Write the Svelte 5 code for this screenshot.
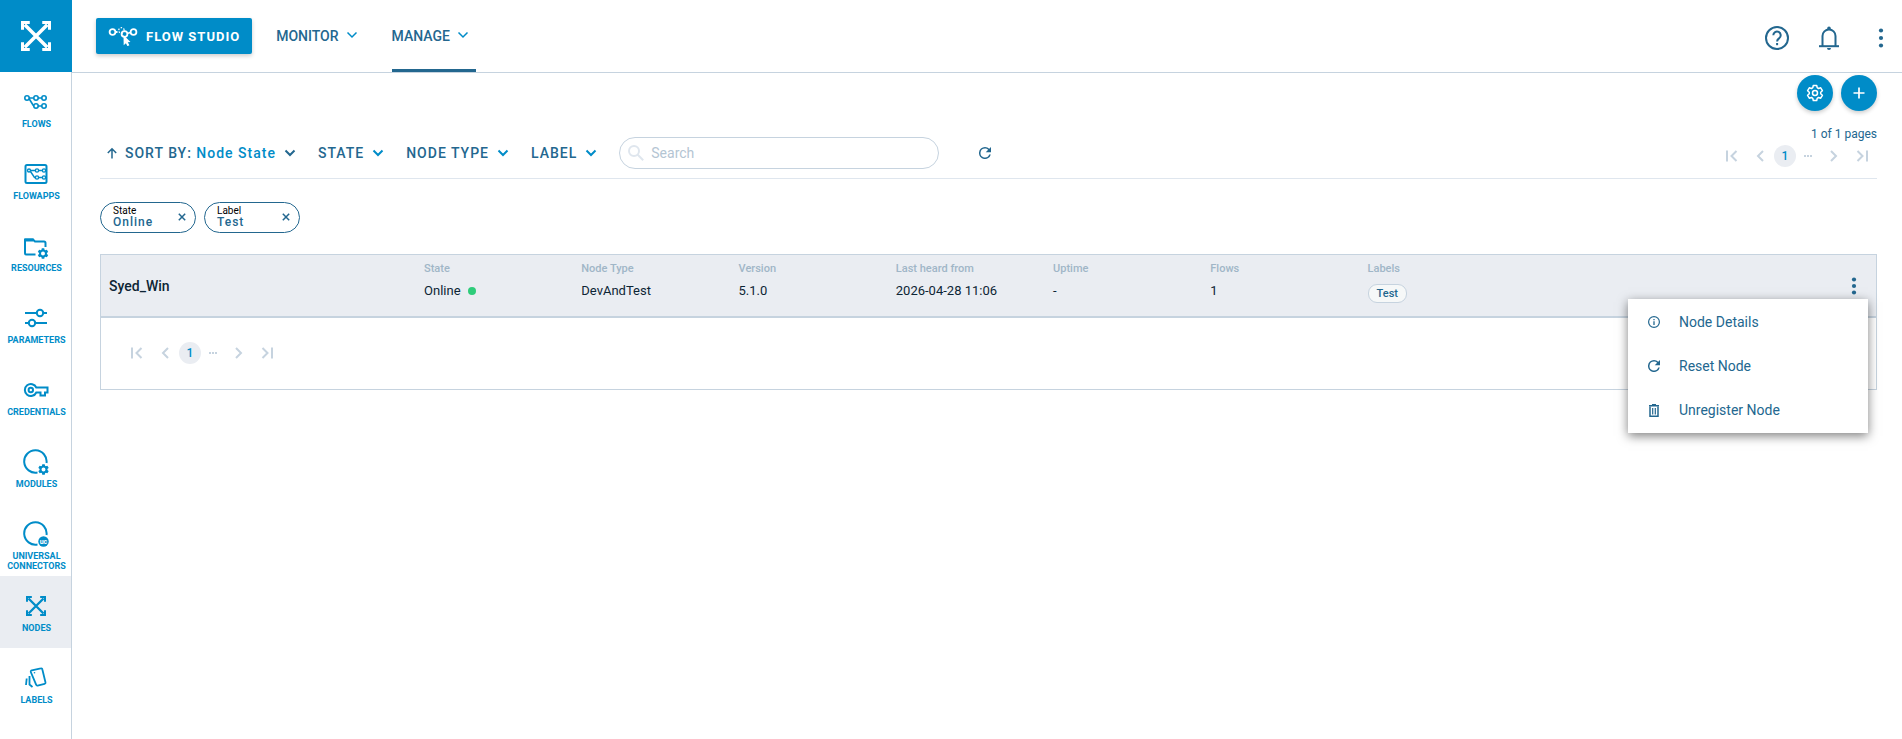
<script lang="ts">
	const navItems = [
		{ id: 'flows', label: 'Flows' },
		{ id: 'flowapps', label: 'FlowApps' },
		{ id: 'resources', label: 'Resources' },
		{ id: 'parameters', label: 'Parameters' },
		{ id: 'credentials', label: 'Credentials' },
		{ id: 'modules', label: 'Modules' },
		{ id: 'connectors', label: 'Universal Connectors' },
		{ id: 'nodes', label: 'Nodes' },
		{ id: 'labels', label: 'Labels' }
	];

	const menuItems = [
		{ id: 'info', label: 'Node Details' },
		{ id: 'refresh', label: 'Reset Node' },
		{ id: 'trash', label: 'Unregister Node' }
	];

	const columns = ['State', 'Node Type', 'Version', 'Last heard from', 'Uptime', 'Flows', 'Labels'];

	const nodes = [
		{
			name: 'Syed_Win',
			state: 'Online',
			values: ['DevAndTest', '5.1.0', '2026-04-28 11:06', '-', '1'],
			label: 'Test'
		}
	];

	let active = $state('nodes');
	let search = $state('');
	let menuOpen = $state(true);
	let filters = $state([
		{ name: 'State', value: 'Online' },
		{ name: 'Label', value: 'Test' }
	]);

	const removeFilter = (name: string) => {
		filters = filters.filter((f) => f.name !== name);
	};
</script>

{#snippet gear()}
	<path
		fill-rule="evenodd"
		d="M19.14 12.94c.04-.3.06-.61.06-.94s-.02-.64-.07-.94l2.03-1.58a.49.49 0 0 0 .12-.61l-1.92-3.32a.49.49 0 0 0-.59-.22l-2.39.96a7 7 0 0 0-1.62-.94l-.36-2.54A.48.48 0 0 0 13.92 2.4h-3.84a.48.48 0 0 0-.48.41l-.36 2.54c-.59.24-1.13.57-1.62.94l-2.39-.96a.48.48 0 0 0-.59.22L2.74 8.87a.48.48 0 0 0 .12.61l2.03 1.58a7 7 0 0 0 0 1.88l-2.03 1.58a.49.49 0 0 0-.12.61l1.92 3.32c.12.22.37.29.59.22l2.39-.96c.5.38 1.03.7 1.62.94l.36 2.54c.05.24.24.41.48.41h3.84c.24 0 .44-.17.47-.41l.36-2.54c.59-.24 1.13-.56 1.62-.94l2.39.96c.22.08.47 0 .59-.22l1.92-3.32a.48.48 0 0 0-.12-.61zM12 15.6a3.6 3.6 0 1 1 0-7.2 3.6 3.6 0 0 1 0 7.2z"
	/>
{/snippet}

{#snippet arrows()}
	<g fill="none" stroke="currentColor">
		<path stroke-width="2.8" d="M3 3l18 18M21 3L3 21" />
		<path stroke-width="2.4" d="M1.2 7V1.2H7M17 1.2h5.800V7M22.800 17v5.800H17M7 22.800H1.200V17" />
	</g>
{/snippet}

{#snippet navIcon(id: string)}
	{#if id === 'flows'}
		<svg width="23" height="14" viewBox="0 0 23 14" fill="none" stroke="currentColor" stroke-width="1.600">
			<circle cx="3" cy="3" r="2.200" /><circle cx="12" cy="3" r="2.200" /><circle cx="20" cy="3" r="2.200" />
			<circle cx="12" cy="11" r="2.200" /><circle cx="20" cy="11" r="2.200" />
			<path d="M5 3h4.800M14 3h4M14 11h4M5 3.500l4 6.500q.6 1 1 1" />
		</svg>
	{:else if id === 'flowapps'}
		<svg width="24" height="20" viewBox="0 0 24 20" fill="none" stroke="currentColor" stroke-width="1.400">
			<rect x="1.500" y="1" width="21" height="18" rx="1.500" stroke-width="2" />
			<circle cx="5" cy="6.500" r="1.500" /><circle cx="13" cy="6.500" r="1.600" /><circle cx="20" cy="6.500" r="1.600" />
			<circle cx="13" cy="13.500" r="1.600" /><circle cx="20" cy="13.500" r="1.600" />
			<path d="M6.500 6.500h5M14.500 6.500h4M14.500 13.500h4M6.500 7.500l4 6h1" />
		</svg>
	{:else if id === 'resources'}
		<svg width="26" height="26" viewBox="0 -4 26 26" fill="none" stroke="currentColor" stroke-width="2">
			<path d="M12.500 17.500H3.500a1.500 1.500 0 0 1-1.500-1.500V2.500h8l2 2h9a1.500 1.500 0 0 1 1.500 1.500v4" />
			<path d="M2 3h8.500" stroke-width="3" />
			<svg x="14" y="11" width="12" height="11" viewBox="2 2 20 20" fill="currentColor" stroke="none">
				{@render gear()}
			</svg>
		</svg>
	{:else if id === 'parameters'}
		<svg width="22" height="20" viewBox="0 0 22 20" fill="none" stroke="currentColor" stroke-width="2">
			<path d="M0 5h12M18 5h4M0 15h4M10 15h12" />
			<circle cx="15" cy="5" r="3.200" /><circle cx="7" cy="15" r="3.200" />
		</svg>
	{:else if id === 'credentials'}
		<svg width="26" height="16" viewBox="0 0 26 16" fill="none" stroke="currentColor" stroke-width="2">
			<path d="M13.300 5.500h11.200v5h-2.500v3h-4.500v-3h-4.200a6 6 0 1 1 0-5z" />
			<circle cx="7.800" cy="8" r="2.200" />
		</svg>
	{:else if id === 'modules' || id === 'connectors'}
		<svg width="26" height="26" viewBox="0 0 26 26" fill="none" stroke="currentColor" stroke-width="2">
			<path d="M14.500 23.500A11.200 11.200 0 1 1 23.500 14" />
			{#if id === 'modules'}
				<svg x="15" y="15" width="11" height="11" viewBox="2 2 20 20" fill="currentColor" stroke="none">
					{@render gear()}
				</svg>
			{:else}
				<circle cx="20.500" cy="20.500" r="5.200" fill="currentColor" stroke="none" />
				<text class="badge" x="20.500" y="22.500" text-anchor="middle">uc</text>
			{/if}
		</svg>
	{:else if id === 'nodes'}
		<svg width="20" height="20" viewBox="0 0 24 24">{@render arrows()}</svg>
	{:else}
		<svg width="22" height="22" viewBox="0 0 22 22" fill="none" stroke="currentColor" stroke-width="1.800">
			<path d="M6.800 3.400l9-2a1.200 1.200 0 0 1 1.500.9l3.200 13.200a1.200 1.200 0 0 1-.9 1.400l-7 1.700a1.200 1.200 0 0 1-1.400-.8L5.800 5a1.300 1.300 0 0 1 1-1.600z" />
			<path d="M4.500 9v8.500l3 2.500M1.700 11.500L1 18" />
			<circle cx="9.500" cy="5.800" r=".8" fill="currentColor" stroke="none" />
		</svg>
	{/if}
{/snippet}

{#snippet smallIcon(id: string)}
	{#if id === 'info'}
		<svg width="12" height="12" viewBox="0 0 12 12" fill="none" stroke="currentColor">
			<circle cx="6" cy="6" r="5.400" stroke-width="1.200" />
			<path d="M6 5.200V9M6 3v1.200" stroke-width="1.300" />
		</svg>
	{:else if id === 'refresh'}
		<svg width="12" height="12" viewBox="4 4 16 16" fill="currentColor">
			<path
				d="M17.650 6.350A7.960 7.960 0 0 0 12 4a8 8 0 1 0 7.730 10h-2.080A6 6 0 1 1 12 6c1.660 0 3.140.69 4.220 1.780L13 11h7V4z"
			/>
		</svg>
	{:else}
		<svg width="12" height="13" viewBox="0 0 12 13" fill="none" stroke="currentColor">
			<path d="M1 1.800h10M4 .7h4" stroke-width="1.400" />
			<path d="M2 2.500v9.700h8V2.500" stroke-width="1.500" />
			<path d="M4.700 4v6.500M7.300 4v6.500" stroke-width="1.200" />
		</svg>
	{/if}
{/snippet}

{#snippet chevron()}
	<svg class="chevron" width="12" height="8" viewBox="0 0 12 8" fill="none" stroke="currentColor">
		<path d="M1.500 1.500L6 6l4.500-4.500" />
	</svg>
{/snippet}

{#snippet kebab(size: number)}
	<svg width="6" height={size} viewBox="0 0 6 {size}" fill="currentColor">
		<circle cx="3" cy="2.500" r="2.100" />
		<circle cx="3" cy={size / 2} r="2.100" />
		<circle cx="3" cy={size - 2.5} r="2.100" />
	</svg>
{/snippet}

{#snippet pager()}
	<div class="pager">
		<button aria-label="First page">
			<svg width="12" height="12" viewBox="0 0 12 12"><path d="M1 0.500v11M10.500 1L5.500 6l5 5" /></svg>
		</button>
		<button aria-label="Previous page">
			<svg width="12" height="12" viewBox="0 0 12 12"><path d="M9 1L4 6l5 5" /></svg>
		</button>
		<button class="current">1</button>
		<span class="dots"><i></i><i></i><i></i></span>
		<button aria-label="Next page">
			<svg width="12" height="12" viewBox="0 0 12 12"><path d="M3 1l5 5-5 5" /></svg>
		</button>
		<button aria-label="Last page">
			<svg width="12" height="12" viewBox="0 0 12 12"><path d="M1.500 1l5 5-5 5M11 0.500v11" /></svg>
		</button>
	</div>
{/snippet}

<div class="app">
	<aside class="sidebar">
		<a class="logo" href="#home" aria-label="Home">
			<svg width="30" height="30" viewBox="0 0 24 24">{@render arrows()}</svg>
		</a>
		<nav>
			{#each navItems as item}
				<a
					href="#{item.id}"
					class="nav-item"
					class:active={active === item.id}
					onclick={() => (active = item.id)}
				>
					<span class="nav-icon">{@render navIcon(item.id)}</span>
					<span class="nav-label">{item.label}</span>
				</a>
			{/each}
		</nav>
	</aside>

	<div class="content">
		<header>
			<button class="studio">
				<svg width="30" height="20" viewBox="0 0 30 20" fill="none" stroke="currentColor" stroke-width="1.800">
					<circle cx="4.500" cy="6" r="2.900" /><circle cx="25.500" cy="6" r="2.900" />
					<path d="M7.500 6h2M19 7.500l3.500-1" />
					<circle cx="13.500" cy="4.500" r="2.800" stroke-dasharray="1.500 1.500" stroke-width="1.200" />
					<circle cx="16.500" cy="8" r="2.900" />
					<path d="M15.500 9l7 7-2.700.2 1.600 3-1.900 1-1.600-3-2.200 2z" fill="currentColor" stroke="none" />
				</svg>
				<span>FLOW STUDIO</span>
			</button>
			<button class="tab">MONITOR {@render chevron()}</button>
			<button class="tab selected">MANAGE {@render chevron()}</button>

			<div class="tools">
				<button aria-label="Help">
					<svg width="24" height="24" viewBox="0 0 24 24" fill="none" stroke="currentColor" stroke-width="2">
						<circle cx="12" cy="12" r="11" />
						<path d="M8.300 9.200a3.700 3.700 0 1 1 5.900 3c-1.300 1-2.100 1.500-2.100 3.300" />
						<path d="M12.100 17v2.200" />
					</svg>
				</button>
				<button aria-label="Notifications">
					<svg width="20" height="24" viewBox="0 0 20 24" fill="none" stroke="currentColor" stroke-width="2">
						<path d="M3.500 20V10a6.500 6.500 0 0 1 13 0v10" />
						<path d="M0 20.200h20" />
						<path d="M8.200 3.500V2.300a1.800 1.800 0 0 1 3.600 0v1.200zM8 22h4a2 2 0 0 1-4 0z" fill="currentColor" stroke="none" />
					</svg>
				</button>
				<button aria-label="More">{@render kebab(20)}</button>
			</div>
		</header>

		<main>
			<div class="actions">
				<button aria-label="Settings">
					<svg width="18" height="18" viewBox="0 0 18 18" fill="none" stroke="currentColor" stroke-width="1.500" stroke-linejoin="round">
						<path
							d="M7.300 1.500h3.400l.5 2.200 1.300.8 2.200-.7 1.700 2.900-1.700 1.500v1.600l1.700 1.500-1.700 2.900-2.200-.7-1.300.8-.5 2.200H7.300l-.5-2.200-1.300-.8-2.200.7-1.700-2.900 1.700-1.500V8.200L1.600 6.700l1.700-2.900 2.200.7 1.300-.8z"
						/>
						<circle cx="9" cy="9" r="2.500" />
					</svg>
				</button>
				<button aria-label="Add node">
					<svg width="12" height="12" viewBox="0 0 12 12" stroke="currentColor" stroke-width="1.700">
						<path d="M6 .5v11M.5 6h11" />
					</svg>
				</button>
			</div>

			<div class="toolbar">
				<button class="filter sort">
					<svg width="10" height="12" viewBox="0 0 10 12" fill="none" stroke="currentColor" stroke-width="1.500">
						<path d="M5 11.500V2M.800 6L5 1.800 9.200 6" />
					</svg>
					<span>SORT BY: <b>Node State</b></span>
					{@render chevron()}
				</button>
				<button class="filter">STATE {@render chevron()}</button>
				<button class="filter">NODE TYPE {@render chevron()}</button>
				<button class="filter">LABEL {@render chevron()}</button>

				<label class="search">
					<svg width="16" height="16" viewBox="0 0 16 16" fill="none" stroke="currentColor" stroke-width="2">
						<circle cx="6" cy="6" r="5" /><path d="M9.500 9.500l5.700 5.700" />
					</svg>
					<input type="text" placeholder="Search" aria-label="Search" bind:value={search} />
				</label>
				<button class="reload" aria-label="Refresh">{@render smallIcon('refresh')}</button>

				<div class="paging">
					<span>1 of 1 pages</span>
					{@render pager()}
				</div>
			</div>

			<div class="chips">
				{#each filters as filter}
					<div class="chip">
						<div>
							<span class="chip-name">{filter.name}</span>
							<span class="chip-value">{filter.value}</span>
						</div>
						<button aria-label="Remove {filter.name}" onclick={() => removeFilter(filter.name)}>
							<svg width="8" height="8" viewBox="0 0 8 8" stroke="currentColor" stroke-width="1.500">
								<path d="M.8.8l6.400 6.400M7.200.8L.8 7.200" />
							</svg>
						</button>
					</div>
				{/each}
			</div>

			<section class="panel">
				<table>
					<colgroup>
						<col class="col-name" />
						<col class="col" span="6" />
						<col />
						<col class="col-action" />
					</colgroup>
					{#each nodes as node}
						<tbody>
							<tr class="heads">
								<th class="name" rowspan="2" scope="rowgroup">{node.name}</th>
								{#each columns as column}
									<th>{column}</th>
								{/each}
								<td class="action" rowspan="2">
									<button class="more" aria-label="Node actions" onclick={() => (menuOpen = !menuOpen)}>
										{@render kebab(18)}
									</button>
									{#if menuOpen}
										<div class="menu">
											{#each menuItems as item}
												<button>
													{@render smallIcon(item.id)}
													{item.label}
												</button>
											{/each}
										</div>
									{/if}
								</td>
							</tr>
							<tr class="values">
								<td>{node.state}<span class="status"></span></td>
								{#each node.values as value}
									<td>{value}</td>
								{/each}
								<td><span class="tag">{node.label}</span></td>
							</tr>
						</tbody>
					{/each}
				</table>
				<footer>{@render pager()}</footer>
			</section>
		</main>
	</div>
</div>

<style>
	:global(body) {
		background: #fff;
	}
	.app {
		--main: #008cc8;
		--dark: #23678f;
		--line: #c6d3df;
		--pale: #eaedf2;
		display: flex;
		min-height: 100vh;
		font-family: Roboto, 'Liberation Sans', sans-serif;
		font-size: 14px;
		color: #0d2535;
	}
	.app * {
		box-sizing: border-box;
	}
	button {
		display: flex;
		align-items: center;
		padding: 0;
		border: 0;
		background: none;
		color: var(--dark);
		font: inherit;
		cursor: pointer;
	}
	svg {
		display: block;
		flex: none;
	}

	.sidebar {
		width: 72px;
		flex: none;
		border-right: 1px solid var(--line);
	}
	.logo {
		display: flex;
		align-items: center;
		justify-content: center;
		width: 72px;
		height: 72px;
		background: var(--main);
		color: #fff;
	}
	.nav-item {
		display: flex;
		flex-direction: column;
		align-items: center;
		height: 72px;
		padding-top: 15px;
		color: var(--main);
		text-decoration: none;
	}
	.nav-item.active {
		background: var(--pale);
	}
	.nav-icon {
		display: flex;
		align-items: center;
		justify-content: center;
		height: 30px;
		margin-bottom: 2px;
	}
	.nav-label {
		padding-left: 2px;
		font-size: 9px;
		font-weight: 700;
		line-height: 10px;
		text-align: center;
		text-transform: uppercase;
	}
	.badge {
		fill: #fff;
		stroke: none;
		font-size: 7px;
		font-weight: 700;
	}

	.content {
		flex: 1;
		min-width: 0;
	}
	header {
		display: flex;
		align-items: center;
		height: 73px;
		padding: 0 9px 0 24px;
		border-bottom: 1px solid var(--line);
	}
	.studio {
		gap: 8px;
		height: 36px;
		padding: 0 12px;
		border-radius: 2px;
		background: var(--main);
		box-shadow: 0 2px 4px rgba(0, 0, 0, 0.2);
		color: #fff;
		font-size: 13px;
		font-weight: 700;
		letter-spacing: 1px;
	}
	.tab {
		gap: 7px;
		height: 72px;
		margin-left: 24px;
		border-bottom: 3px solid transparent;
		border-top: 3px solid transparent;
		font-weight: 500;
	}
	.tab.selected {
		margin-left: 34px;
		padding-right: 7px;
		border-bottom-color: var(--dark);
	}
	.chevron {
		color: var(--main);
		stroke-width: 2;
	}
	.tab .chevron {
		margin-bottom: 3px;
		stroke-width: 1.5;
	}
	.tools {
		display: flex;
		align-items: center;
		gap: 28px;
		margin-left: auto;
		padding-top: 3px;
	}
	.tools button {
		justify-content: center;
		width: 24px;
	}

	main {
		padding: 2px 25px 24px 28px;
	}
	.actions {
		display: flex;
		justify-content: flex-end;
		gap: 8px;
	}
	.actions button {
		justify-content: center;
		width: 36px;
		height: 36px;
		border-radius: 50%;
		background: var(--main);
		box-shadow: 0 2px 4px rgba(0, 0, 0, 0.2);
		color: #fff;
	}

	.toolbar {
		display: flex;
		align-items: center;
		height: 68px;
		padding: 17px 0 0 7px;
		border-bottom: 1px solid #dfe6ee;
	}
	.filter {
		gap: 8px;
		margin-right: 22px;
		font-weight: 500;
		letter-spacing: 1px;
	}
	.filter b {
		color: var(--main);
		font-weight: 500;
	}
	.filter.sort .chevron {
		color: var(--dark);
	}
	.search {
		display: flex;
		align-items: center;
		gap: 7px;
		width: 320px;
		height: 32px;
		padding: 0 8px;
		border: 1px solid var(--line);
		border-radius: 16px;
		color: #dfe6ee;
	}
	.search input {
		flex: 1;
		min-width: 0;
		padding: 0;
		border: 0;
		outline: 0;
		background: none;
		color: #0d2535;
		font: inherit;
	}
	.search input::placeholder {
		color: #b4c5d3;
	}
	.reload {
		margin-left: 40px;
	}
	.paging {
		align-self: flex-end;
		margin-left: auto;
		padding-bottom: 11px;
		color: var(--dark);
		font-size: 12px;
		line-height: 16px;
		text-align: right;
	}
	.paging .pager {
		margin: 3px 9px 0 0;
	}

	.pager {
		display: flex;
		align-items: center;
		gap: 16px;
	}
	.pager svg {
		fill: none;
		stroke: #c6d3df;
		stroke-width: 2;
	}
	.pager .current {
		justify-content: center;
		width: 22px;
		height: 22px;
		margin: 0 -8px;
		border-radius: 50%;
		background: var(--pale);
		color: var(--main);
		font-size: 12px;
		font-weight: 500;
	}
	.dots {
		display: flex;
		gap: 1px;
	}
	.dots i {
		width: 2px;
		height: 2px;
		background: #c6d3df;
	}

	.chips {
		display: flex;
		gap: 8px;
		padding: 23px 0 21px;
	}
	.chip {
		display: flex;
		align-items: center;
		justify-content: space-between;
		width: 96px;
		height: 31px;
		padding: 0 9px 1px 12px;
		border: 1px solid var(--dark);
		border-radius: 16px;
	}
	.chip span {
		display: block;
	}
	.chip-name {
		color: #000;
		font-size: 10px;
		line-height: 10px;
	}
	.chip-value {
		color: var(--dark);
		font-size: 12px;
		font-weight: 500;
		letter-spacing: 1px;
		line-height: 12px;
	}

	.panel {
		border: 1px solid var(--line);
	}
	table {
		width: 100%;
		table-layout: fixed;
		border-collapse: separate;
		border-spacing: 0;
		border-bottom: 2px solid var(--line);
		background: var(--pale);
		text-align: left;
	}
	.col-name {
		width: 18.2%;
	}
	.col {
		width: 8.86%;
	}
	.col-action {
		width: 37px;
	}
	th,
	td {
		padding: 0;
		vertical-align: top;
	}
	.heads th {
		height: 25px;
		padding-top: 6px;
		color: #a0b6c7;
		font-size: 11px;
		font-weight: 500;
		line-height: 16px;
	}
	.heads .name {
		padding: 0 0 0 8px;
		color: #0d2535;
		font-size: 14px;
		vertical-align: middle;
	}
	.values td {
		height: 36px;
		padding-top: 2px;
		font-size: 13px;
		line-height: 18px;
	}
	.status {
		display: inline-block;
		width: 8px;
		height: 8px;
		margin-left: 7px;
		border-radius: 50%;
		background: #2ecc7a;
	}
	.tag {
		display: inline-block;
		margin-top: 2px;
		padding: 0 8px;
		border: 1px solid var(--line);
		border-radius: 9px;
		background: #f6f8f8;
		color: var(--dark);
		font-size: 11px;
		font-weight: 500;
		line-height: 17px;
	}
	.heads .action {
		position: relative;
		vertical-align: middle;
	}
	.more {
		justify-content: center;
		width: 30px;
		height: 30px;
	}
	.menu {
		position: absolute;
		top: 44px;
		right: 8px;
		z-index: 1;
		width: 240px;
		padding: 1px 0;
		background: #fff;
		box-shadow: 0 3px 10px rgba(0, 0, 0, 0.5);
	}
	.menu button {
		gap: 19px;
		width: 100%;
		height: 44px;
		padding: 0 20px;
		white-space: nowrap;
	}
	footer {
		padding: 24px 30px 25px;
	}
</style>
